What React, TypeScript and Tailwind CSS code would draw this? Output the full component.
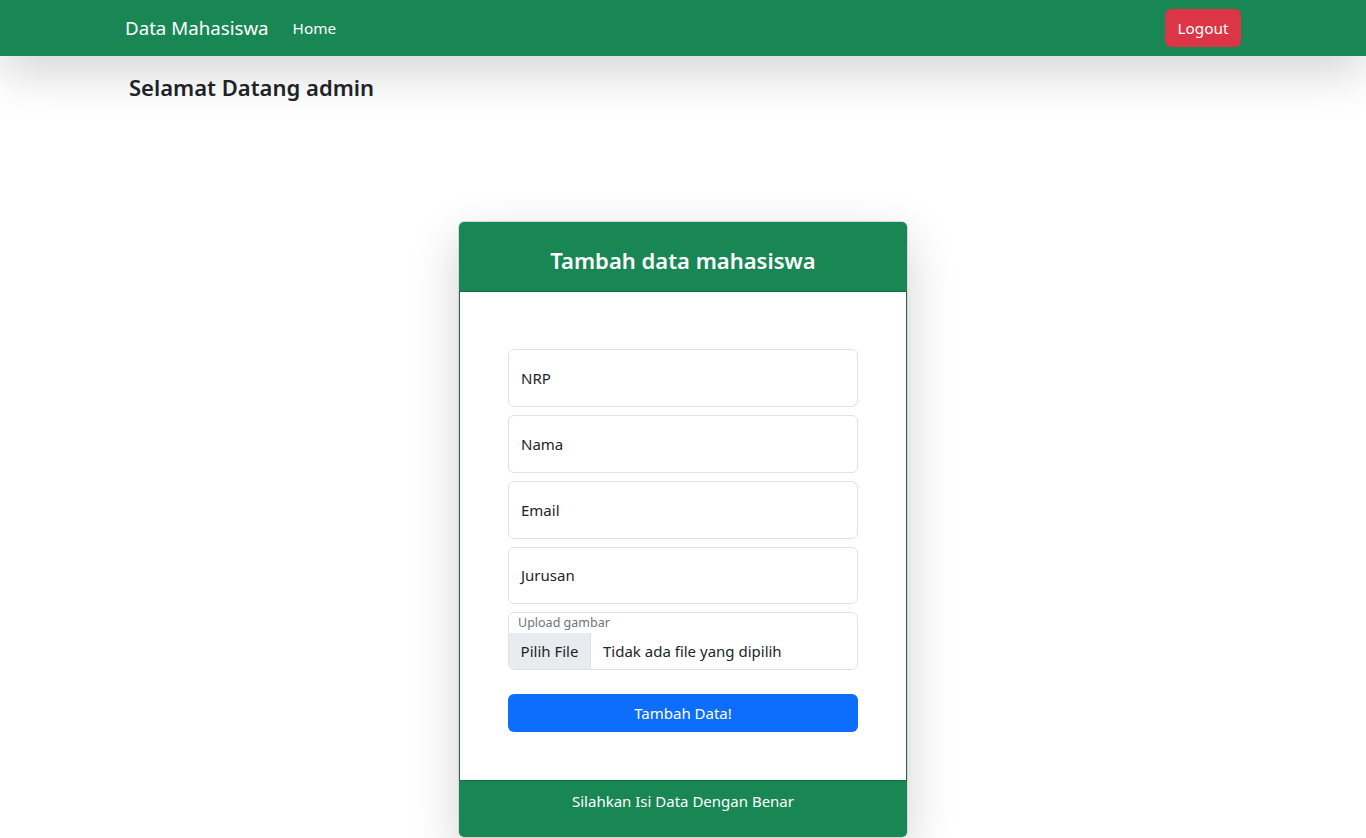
import React from "react";

const font = { fontFamily: '"Segoe UI", "Noto Sans", "Liberation Sans", sans-serif' };

export default function App() {
  return (
    <div className="min-h-[838px] bg-white text-[#212529]" style={font}>
      <nav className="relative z-10 h-[56px] bg-[#198754] shadow-[0_1rem_3rem_rgba(0,0,0,0.175)]">
        <div className="mx-auto flex h-full max-w-[1140px] items-center px-3">
          <span className="mr-[16px] text-[18.7px] leading-[30px] text-white">Data Mahasiswa</span>
          <span className="px-2 text-[15.3px] text-white">Home</span>
          <div className="ml-auto">
            <button className="h-[38px] w-[76px] rounded-[6px] bg-[#dc3545] text-[15.3px] text-white">Logout</button>
          </div>
        </div>
      </nav>
      <div className="mx-auto max-w-[1140px] px-3">
        <h4 className="mt-[16px] pl-[4px] text-[22px] font-semibold leading-[30px]">Selamat Datang admin</h4>
      </div>
      <div className="mt-[119px] flex justify-center">
        <div className="w-[450px] overflow-hidden rounded-[6px] border border-[#d5d8da] shadow-[0_1rem_3rem_rgba(0,0,0,0.175)]">
          <div className="flex h-[70px] items-center justify-center border-b border-[#146c43] bg-[#198754] pt-[8px]">
            <h3 className="text-[22px] font-semibold text-white">Tambah data mahasiswa</h3>
          </div>
          <div className="flex flex-col gap-2 border-x border-[#3a5a4a] bg-white px-[48px] pb-[48px] pt-[57px]">
            {["NRP", "Nama", "Email", "Jurusan"].map((l, i) => (
              <div
                key={l}
                className={`flex items-center rounded-[6px] border border-[#dee2e6] px-3 text-[15px] ${i === 3 ? "h-[57px]" : "h-[58px]"}`}
              >
                {l}
              </div>
            ))}
            <div className="flex h-[58px] flex-col overflow-hidden rounded-[6px] border border-[#dee2e6]">
              <div className="h-[20px] px-[9px] text-[12.5px] leading-[20px] text-[#6c757d]">Upload gambar</div>
              <div className="flex flex-1 items-center text-[15px]">
                <div className="flex h-full w-[82px] items-center justify-center border-r border-[#dee2e6] bg-[#e9ecef]">Pilih File</div>
                <div className="px-3">Tidak ada file yang dipilih</div>
              </div>
            </div>
            <button className="mt-4 h-[38px] rounded-[6px] bg-[#0d6efd] text-[15px] text-white">Tambah Data!</button>
          </div>
          <div className="flex h-[57px] justify-center border-t border-[#146c43] bg-[#198754] pt-[9px] text-[15px] text-white">
            Silahkan Isi Data Dengan Benar
          </div>
        </div>
      </div>
    </div>
  );
}
